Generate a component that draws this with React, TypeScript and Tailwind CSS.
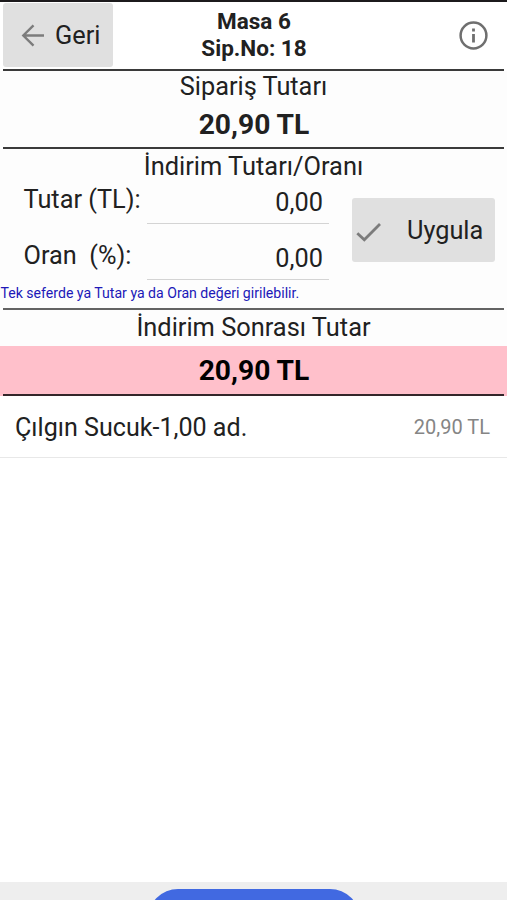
import React from 'react';

const Rule = ({ className = 'bg-[#3a3a3a]' }: { className?: string }) => (
  <div className={`mx-[3px] h-[2px] shrink-0 ${className}`} />
);

function Field({ label, value }: { label: string; value: string }) {
  return (
    <div className="flex h-14">
      <label className="w-[147px] whitespace-pre pl-[23.5px] pt-[5px] text-[25.3px] leading-[28px]">{label}</label>
      <div className="flex h-[43px] w-[182px] items-start justify-end border-b border-[#d4d4d4] pr-[6px] pt-[8px] text-[25.3px] leading-[28px]">
        {value}
      </div>
    </div>
  );
}

export default function App() {
  return (
    <div className="flex h-[900px] w-[507px] flex-col overflow-hidden bg-white font-['Roboto',sans-serif] text-[#212121]">
      <div className="h-[2px] shrink-0 bg-[#1c1a1c]" />
      <header className="flex h-[67px] shrink-0 items-start justify-between">
        <button className="ml-[3px] mt-px flex h-[64px] w-[110px] items-center rounded-[3px] bg-[#e0e0e0] pl-[18px]">
          <svg className="h-[24px] w-[24px]" viewBox="0 0 24 24" fill="none" stroke="#7c7c7c" strokeWidth="2.4">
            <path d="M23 12.5H2.5M12.5 2.3L2.3 12.5l10.2 10.2" />
          </svg>
          <span className="ml-[10px] pt-[2px] text-[25.3px] leading-[28px]">Geri</span>
        </button>
        <h1 className="pl-px pt-[6px] text-center text-[22.5px] font-bold leading-[26.5px]">
          Masa 6<br />Sip.No: 18
        </h1>
        <div className="flex w-[113px] justify-end pr-[19px] pt-[19px]">
          <svg className="h-[29px] w-[29px]" viewBox="0 0 29 29" fill="none" stroke="#6f6f6f">
            <circle cx="14.5" cy="14.5" r="12.9" strokeWidth="2.5" />
            <path d="M14.5 13v8.5M14.5 7.6v2.8" strokeWidth="2.8" />
          </svg>
        </div>
      </header>
      <Rule />
      <section className="h-[76px] shrink-0 bg-[#fdfdfd] text-center">
        <p className="pt-[2px] text-[25.3px] leading-[28px]">Sipariş Tutarı</p>
        <p className="pl-px pt-[8px] text-[28.2px] font-bold leading-[32px]">20,90 TL</p>
      </section>
      <Rule />
      <section className="h-[159px] shrink-0 bg-[#fdfdfd]">
        <h2 className="pb-px pt-[3px] text-center text-[25.4px] leading-[28px]">İndirim Tutarı/Oranı</h2>
        <div className="flex h-[104px]">
          <div className="w-[329px]">
            <Field label="Tutar (TL):" value="0,00" />
            <Field label="Oran  (%):" value="0,00" />
          </div>
          <button className="ml-[23px] mt-[17px] flex h-[64px] w-[143px] items-center rounded-[3px] bg-[#e0e0e0] pl-[4px]">
            <svg className="mt-[3px] h-[20px] w-[26px]" viewBox="0 0 26 20" fill="none" stroke="#7c7c7c" strokeWidth="2.8">
              <path d="M1.3 11.2l7 6.5L24 2" />
            </svg>
            <span className="ml-[25px] pt-[2px] text-[25.3px] leading-[28px]">Uygula</span>
          </button>
        </div>
        <p className="whitespace-nowrap pl-[0.5px] text-[14.1px] leading-[16px] text-[#2018b8]">
          Tek seferde ya Tutar ya da Oran değeri girilebilir.
        </p>
      </section>
      <Rule className="bg-[#636363]" />
      <section className="shrink-0 text-center">
        <h2 className="h-[36px] bg-[#fdfdfd] pt-[3px] text-[25.4px] leading-[28px]">İndirim Sonrası Tutar</h2>
        <div className="h-[50px] bg-[#ffc0cb] text-black">
          <p className="h-[48px] pl-px pt-[9px] text-[28.2px] font-bold leading-[32px]">20,90 TL</p>
          <Rule className="bg-[#34262a]" />
        </div>
      </section>
      <div className="flex h-[62px] shrink-0 items-center justify-between border-b border-[#e8e8e8] pl-[15px] pr-[17px] pt-px">
        <span className="pt-px text-[25.1px] leading-[28px]">Çılgın Sucuk-1,00 ad.</span>
        <span className="text-[20px] leading-[24px] text-[#858585]">20,90 TL</span>
      </div>
      <main className="grow" />
      <footer className="h-[18px] shrink-0 overflow-hidden bg-[#eeeeee] pt-[7px]">
        <button className="mx-auto block h-[60px] w-[212px] rounded-[32px] bg-[#4169e1]" />
      </footer>
    </div>
  );
}
